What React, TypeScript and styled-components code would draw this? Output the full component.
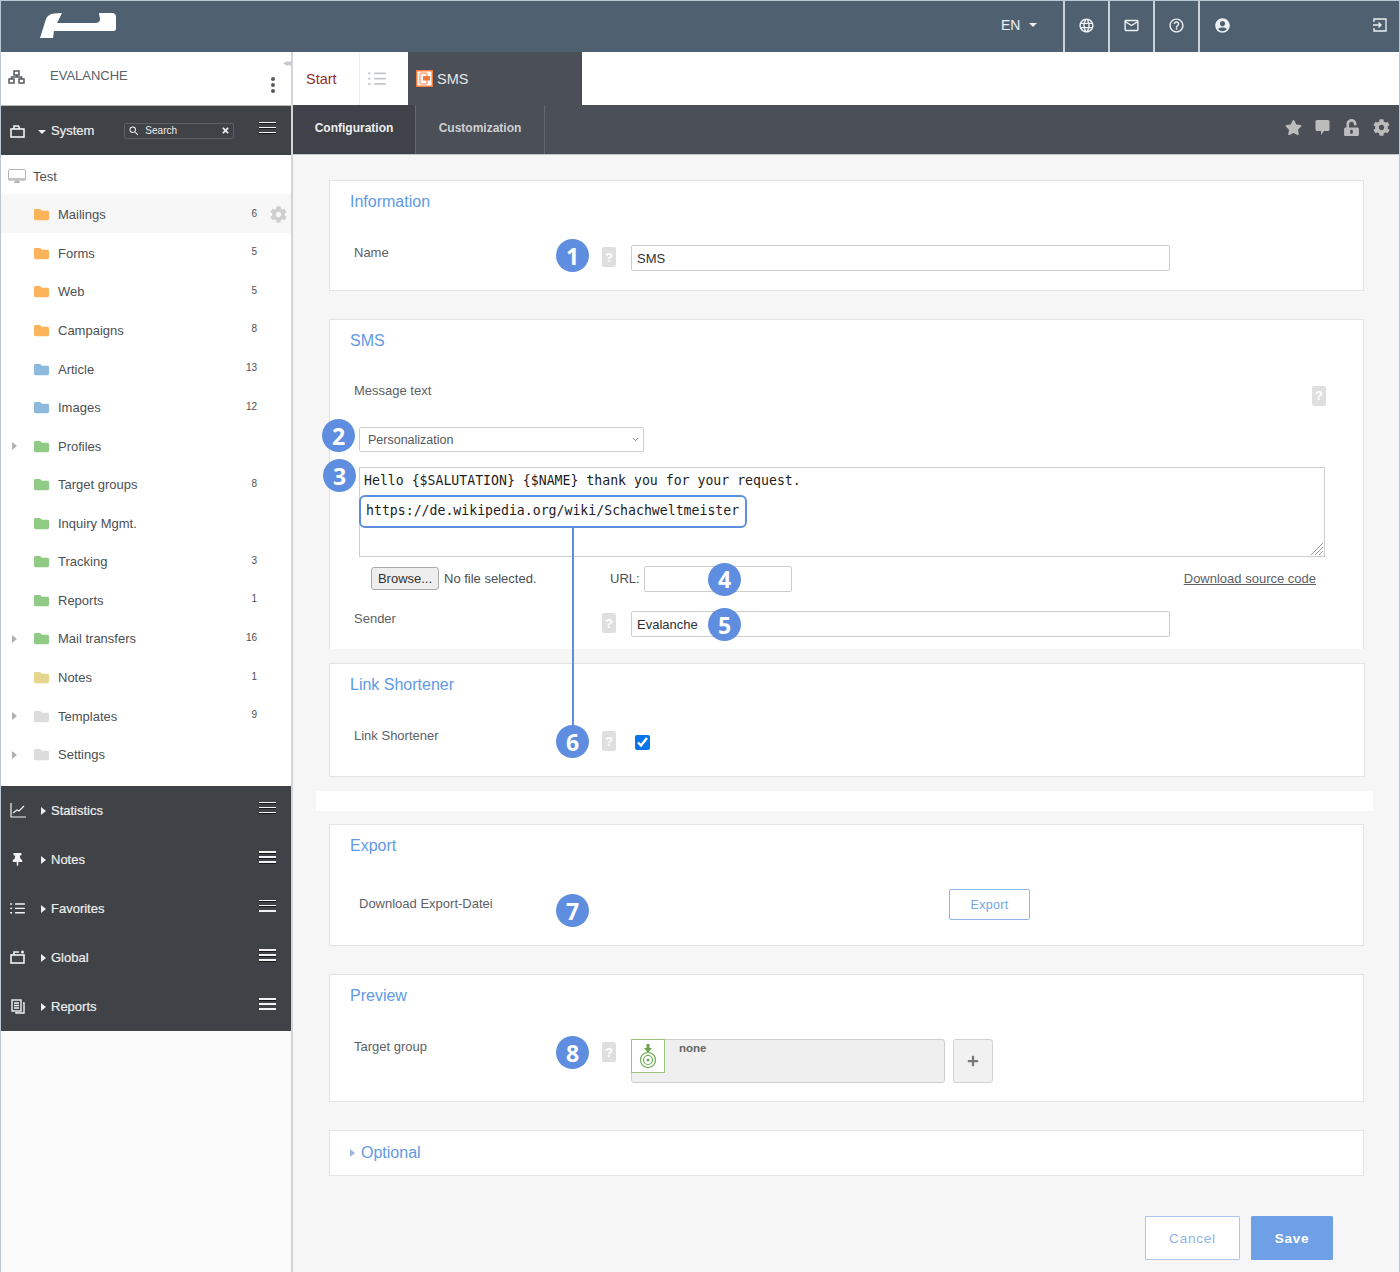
import styled, { createGlobalStyle } from 'styled-components';
import { ReactNode } from 'react';
import { ChevronDown } from 'lucide-react';
import { FaCog, FaFolder, FaPlus, FaStar, FaThumbtack, FaTimes, FaUnlockAlt, FaUserCircle } from 'react-icons/fa';
import { MdHelpOutline, MdLanguage, MdMailOutline, MdOutlineSearch } from 'react-icons/md';

const GlobalStyle = createGlobalStyle`
  html, body { margin: 0; padding: 0; background: #fff; }
  * { box-sizing: border-box; }
  body { font-family: "Liberation Sans", Arial, sans-serif; }
`;

const Frame = styled.div`
  width: 1400px;
  height: 1272px;
  overflow: hidden;
  display: flex;
  flex-direction: column;
  border: 1px solid #b9c8d3;
  border-bottom: 0;
  background: #f6f6f6;
`;

const TopBar = styled.header`
  height: 51px;
  flex: none;
  display: flex;
  align-items: stretch;
  background: #4f6170;
  color: #eef1f3;
`;

const Logo = styled.svg`
  width: 76px;
  height: 25px;
  margin: 12px 0 0 39px;
`;

const LangButton = styled.div`
  margin-left: auto;
  width: 62px;
  display: flex;
  align-items: center;
  gap: 9px;
  font-size: 14px;
  padding-bottom: 3px;
`;

const Caret = styled.span<{ $dir?: 'down' | 'right'; $color?: string }>`
  display: inline-block;
  width: 0;
  height: 0;
  ${(p) =>
    p.$dir === 'right'
      ? `border-top: 4px solid transparent; border-bottom: 4px solid transparent; border-left: 5px solid ${p.$color ?? '#eee'};`
      : `border-left: 4px solid transparent; border-right: 4px solid transparent; border-top: 4px solid ${p.$color ?? '#eee'};`}
`;

const TopIcon = styled.div`
  width: 45px;
  display: flex;
  align-items: center;
  justify-content: center;
  border-left: 2px solid #c9d2d8;
  font-size: 17px;
  padding-bottom: 3px;
`;

const UserCell = styled(TopIcon)`
  width: 201px;
  justify-content: space-between;
  padding: 0 12px 3px 15px;
`;

const Body = styled.div`
  flex: 1;
  display: flex;
  min-height: 0;
`;

const Sidebar = styled.aside`
  position: relative;
  width: 292px;
  flex: none;
  border-right: 2px solid #d2d4d6;
  background: #fbfbfb;
`;

const CollapseMark = styled.span`
  position: absolute;
  top: 5px;
  right: 2px;
  color: #c4c8cc;
  font-size: 10px;
  letter-spacing: -2px;
`;

const TreeHead = styled.div`
  height: 54px;
  display: flex;
  align-items: center;
  padding: 0 16px 4px 7px;
  background: #fff;
  border-bottom: 1px solid #b9bbbd;
  color: #5a6068;
  font-size: 13px;
`;

const HeadName = styled.span`
  margin-left: 25px;
  margin-bottom: 3px;
`;

const Kebab = styled.span`
  margin-left: auto;
  margin-top: 16px;
  width: 4px;
  height: 4px;
  border-radius: 50%;
  background: #555a60;
  box-shadow: 0 -6px 0 #555a60, 0 6px 0 #555a60;
`;

const DarkRow = styled.div<{ $h?: number }>`
  height: ${(p) => p.$h ?? 49}px;
  display: flex;
  align-items: center;
  background: #3f4247;
  color: #eee;
  padding-left: 8px;
  font-size: 13px;
  -webkit-text-stroke: 0.2px #eee;
`;

const DarkIcon = styled.span`
  width: 17px;
  height: 17px;
  display: flex;
  align-items: center;
  justify-content: center;
  font-size: 15px;
  -webkit-text-stroke: 0;
`;

const CaretSlot = styled.span`
  width: 25px;
  display: flex;
  justify-content: flex-end;
  padding-right: 5px;
  padding-top: 2px;
`;

const Burger = styled.span`
  margin-left: auto;
  margin-right: 15px;
  margin-bottom: 4px;
  width: 17px;
  height: 13px;
  background: repeating-linear-gradient(
    to bottom,
    #f2f2f2 0,
    #f2f2f2 1.5px,
    #17181a 1.5px,
    #17181a 2.5px,
    transparent 2.5px,
    transparent 5px
  );
`;

const SearchBox = styled.div`
  margin-left: 30px;
  width: 110px;
  height: 16px;
  display: flex;
  align-items: center;
  border: 1px solid #5c6066;
  border-radius: 2px;
  padding: 0 3px;
  font-size: 10px;
  gap: 5px;
  -webkit-text-stroke: 0;
  svg:last-child { margin-left: auto; }
`;

const Tree = styled.div`
  background: #fff;
  padding-bottom: 13.4px;
`;

const TreeRoot = styled.div`
  height: 39px;
  display: flex;
  align-items: center;
  padding: 3px 0 0 7px;
  gap: 7px;
  font-size: 13px;
  color: #4c4f54;
`;

const TreeRow = styled.div<{ $active?: boolean }>`
  height: 38.57px;
  display: grid;
  grid-template-columns: 32px 17px 8px 1fr 30px 34px;
  align-items: center;
  padding-top: 3px;
  font-size: 13px;
  color: #4c4f54;
  background: ${(p) => (p.$active ? '#f7f7f7' : 'transparent')};
`;

const Arrow = styled.span`
  display: flex;
  padding-left: 11px;
`;

const FolderIcon = styled(FaFolder)<{ $color: string }>`
  color: ${(p) => p.$color};
  width: 17px;
  height: 15px;
`;

const TreeLabel = styled.span`
  grid-column: 4;
`;

const Count = styled.span`
  grid-column: 5;
  text-align: right;
  font-size: 10px;
  margin-top: -3px;
`;

const RowGear = styled(FaCog)`
  justify-self: end;
  margin-right: 4px;
  color: #cfcfcf;
  font-size: 17px;
`;

const Main = styled.main`
  flex: 1;
  min-width: 0;
  display: flex;
  flex-direction: column;
`;

const TabRow = styled.div`
  height: 53px;
  flex: none;
  display: flex;
  background: #fff;
`;

const StartTab = styled.div`
  width: 67px;
  display: flex;
  align-items: center;
  padding-left: 13px;
  border-right: 1px solid #eee;
  color: #8f2f2a;
  font-size: 14.5px;
`;

const ListTab = styled.div`
  width: 48px;
  display: flex;
  align-items: center;
  padding-left: 8px;
  color: #c3c6c9;
`;

const OpenTab = styled.div`
  width: 174px;
  display: flex;
  align-items: center;
  gap: 4px;
  padding-left: 8px;
  background: #4b4f57;
  color: #e6e6e6;
  font-size: 14.5px;
`;

const SubBar = styled.div`
  height: 50px;
  flex: none;
  display: flex;
  background: #4b4f57;
  border-bottom: 1px solid #c5c8cb;
`;

const SubTab = styled.div<{ $active?: boolean }>`
  width: ${(p) => (p.$active ? 123 : 129)}px;
  display: flex;
  align-items: center;
  justify-content: center;
  padding-bottom: 4px;
  border-right: 1px solid #63676e;
  background: ${(p) => (p.$active ? '#3f4248' : 'transparent')};
  color: ${(p) => (p.$active ? '#eee' : '#cfd0d2')};
  font-size: 12px;
  font-weight: 700;
`;

const SubActions = styled.div`
  margin-left: auto;
  display: flex;
  align-items: center;
  gap: 13px;
  padding: 0 9px 4px 0;
  color: #bcbcbc;
  font-size: 17px;
`;

const Content = styled.div`
  flex: 1;
  padding: 25px 35px 0 36px;
`;

const Section = styled.section<{ $open?: boolean; $wide?: boolean; $gap?: number }>`
  background: #fff;
  border: 1px solid #e4e4e4;
  ${(p) => p.$open && 'border-bottom: 0;'}
  padding: 11px 0 ${(p) => (p.$open ? 12 : 18)}px;
  margin-bottom: ${(p) => p.$gap ?? 28}px;
  margin-right: ${(p) => (p.$wide ? -1 : 0)}px;
`;

const Title = styled.h2`
  margin: 0 0 0 20px;
  font-size: 16px;
  line-height: 20px;
  font-weight: 400;
  color: #5f9ae8;
`;

const FieldRow = styled.div<{ $mt?: number }>`
  display: flex;
  align-items: flex-start;
  margin-top: ${(p) => p.$mt ?? 27}px;
  padding-left: 24px;
`;

const FieldLabel = styled.div<{ $top?: number; $x?: number }>`
  width: 202px;
  flex: none;
  margin-top: ${(p) => p.$top ?? 4}px;
  padding-left: ${(p) => p.$x ?? 0}px;
  line-height: 20px;
  font-size: 13px;
  color: #5d6166;
`;

const Badge = styled.span`
  width: 33px;
  height: 33px;
  flex: none;
  position: relative;
  z-index: 2;
  display: flex;
  align-items: center;
  justify-content: center;
  border-radius: 50%;
  background: #5f8ee0;
  color: #fff;
  font-family: "Open Sans", sans-serif;
  font-size: 23px;
  font-weight: 700;
`;

const FloatBadge = styled(Badge)<{ $left: number; $top: number }>`
  position: absolute;
  left: ${(p) => p.$left}px;
  top: ${(p) => p.$top}px;
`;

const BadgeSlot = styled.span`
  width: 33px;
  flex: none;
`;

const Help = styled.span<{ $top?: number }>`
  width: 14px;
  height: 20px;
  flex: none;
  margin: ${(p) => p.$top ?? 8}px 15px 0 13px;
  display: flex;
  align-items: center;
  justify-content: center;
  border-radius: 2px;
  background: #dfdfdf;
  color: #fff;
  font-size: 13px;
  font-weight: 700;
`;

const TextInput = styled.input<{ $w?: number }>`
  width: ${(p) => p.$w ?? 539}px;
  height: 26px;
  display: block;
  padding: 0 5px;
  border: 1px solid #cccccc;
  border-radius: 2px;
  background: #fff;
  color: #2e3033;
  font: 13px "Liberation Sans", Arial, sans-serif;
  outline: none;
`;

const InputWrap = styled.div<{ $top?: number }>`
  position: relative;
  margin-top: ${(p) => p.$top ?? 6}px;
`;

const MessageHead = styled.div`
  display: flex;
  justify-content: space-between;
  margin-top: 30px;
  padding: 0 37px 0 24px;
  line-height: 20px;
  font-size: 13px;
  color: #5d6166;
`;

const MessageHelp = styled(Help)`
  margin: 5px 0 0;
`;

const SelectWrap = styled.div`
  position: relative;
  width: 285px;
  height: 25px;
  margin: 21px 0 0 29px;
  svg { position: absolute; right: 4px; top: 8px; color: #555; }
`;

const Select = styled.select`
  appearance: none;
  width: 100%;
  height: 100%;
  padding: 0 8px;
  border: 1px solid #cfcfcf;
  border-radius: 2px;
  background: #fff;
  color: #55585c;
  font: 12.5px "Liberation Sans", Arial, sans-serif;
`;

const MessageBox = styled.div`
  position: relative;
  width: 966px;
  height: 90px;
  margin: 15px 0 0 29px;
  border: 1px solid #cfcfcf;
  font-family: "DejaVu Sans Mono", monospace;
  font-size: 13.2px;
  color: #1d1d1d;
`;

const MessageLine = styled.div`
  padding-left: 4px;
  height: 26px;
  line-height: 25px;
`;

const LinkBox = styled.div`
  position: relative;
  width: 388px;
  height: 33px;
  margin: 1px 0 0 -1px;
  padding-left: 5px;
  line-height: 28px;
  background: #fff;
  border: 2px solid #5f8ee0;
  border-radius: 6px;

  &::after {
    content: '';
    position: absolute;
    left: 211px;
    top: 100%;
    width: 2px;
    height: 198px;
    margin-top: 2px;
    background: #5f8ee0;
  }
`;

const Resizer = styled.svg`
  position: absolute;
  right: 0;
  bottom: 0;
`;

const FileRow = styled.div`
  display: flex;
  align-items: center;
  height: 27px;
  margin-top: 8px;
  padding: 0 47px 0 41px;
  font-size: 13px;
  color: #4c4f54;
`;

const BrowseButton = styled.button`
  width: 68px;
  height: 23px;
  padding: 0;
  border: 1px solid #aaa;
  border-radius: 3px;
  background: #eeeeee;
  color: #333;
  font: 13px "Liberation Sans", Arial, sans-serif;
`;

const NoFile = styled.span`
  width: 166px;
  margin-left: 5px;
`;

const UrlLabel = styled.span`
  width: 34px;
`;

const SourceLink = styled.a`
  margin-left: auto;
  color: #5d6166;
  text-decoration: underline;
`;

const Band = styled.div`
  height: 20px;
  margin: 0 -9px 13px -13px;
  background: #fff;
`;

const CheckBox = styled.input`
  width: 15px;
  height: 15px;
  margin: 10px 0 0 4px;
  accent-color: #0a75e8;
`;

const ExportButton = styled.button`
  width: 81px;
  height: 31px;
  margin-left: 360px;
  border: 1px solid #8db6ea;
  border-radius: 2px;
  background: #fff;
  color: #75a5e6;
  font: 12.5px "Liberation Sans", Arial, sans-serif;
  letter-spacing: 0.3px;
`;

const ExportBadge = styled(Badge)`
  margin-top: 5px;
`;

const TargetBox = styled.div`
  width: 314px;
  height: 44px;
  margin-top: 3px;
  display: flex;
  align-items: flex-start;
  border: 1px solid #cecece;
  border-radius: 3px;
  background: #efefef;
  color: #666;
  font-size: 11.5px;
  font-weight: 700;
`;

const TargetThumb = styled.span`
  width: 34px;
  height: 34px;
  margin: -1px 0 0 -1px;
  display: flex;
  align-items: center;
  justify-content: center;
  border: 1px solid #9ac27b;
  background: #fff;
`;

const TargetName = styled.span`
  margin: 2px 0 0 14px;
`;

const AddButton = styled.button`
  width: 40px;
  height: 44px;
  margin: 3px 0 0 8px;
  display: flex;
  align-items: center;
  justify-content: center;
  border: 1px solid #d2d2d2;
  border-radius: 3px;
  background: #f1f1f1;
  color: #777;
  font-size: 12px;
`;

const OptionalBar = styled.div`
  height: 46px;
  display: flex;
  align-items: center;
  gap: 6px;
  padding-left: 20px;
  background: #fff;
  border: 1px solid #e4e4e4;
  color: #5f9ae8;
  font-size: 16px;
`;

const Actions = styled.div`
  display: flex;
  justify-content: flex-end;
  gap: 11px;
  margin-top: 40px;
  padding-right: 31px;
`;

const ActionButton = styled.button<{ $primary?: boolean }>`
  width: ${(p) => (p.$primary ? 82 : 95)}px;
  height: 44px;
  border: 1px solid ${(p) => (p.$primary ? '#6f9fe6' : '#a9c6ee')};
  border-radius: 1px;
  background: ${(p) => (p.$primary ? '#6f9fe6' : '#fff')};
  color: ${(p) => (p.$primary ? '#fff' : '#8fb4e9')};
  font: ${(p) => (p.$primary ? 700 : 400)} 13.5px "Liberation Sans", Arial, sans-serif;
  letter-spacing: 0.8px;
`;

const folders = [
  { name: 'Mailings', count: '6', color: '#fbb45c', active: true },
  { name: 'Forms', count: '5', color: '#fbb45c' },
  { name: 'Web', count: '5', color: '#fbb45c' },
  { name: 'Campaigns', count: '8', color: '#fbb45c' },
  { name: 'Article', count: '13', color: '#8db9dc' },
  { name: 'Images', count: '12', color: '#8db9dc' },
  { name: 'Profiles', color: '#8fcb85', more: true },
  { name: 'Target groups', count: '8', color: '#8fcb85' },
  { name: 'Inquiry Mgmt.', color: '#8fcb85' },
  { name: 'Tracking', count: '3', color: '#8fcb85' },
  { name: 'Reports', count: '1', color: '#8fcb85' },
  { name: 'Mail transfers', count: '16', color: '#8fcb85', more: true },
  { name: 'Notes', count: '1', color: '#e5d58d' },
  { name: 'Templates', count: '9', color: '#dcdcdc', more: true },
  { name: 'Settings', color: '#dcdcdc', more: true },
];

const TreeIcon = () => (
  <svg width="17" height="14" viewBox="0 0 17 14" fill="none" stroke="#555a60" strokeWidth="1.5">
    <rect x="6" y="1" width="5" height="4" />
    <rect x="1" y="9" width="5" height="4" />
    <rect x="11" y="9" width="5" height="4" />
    <path d="M3.5 9V7h10v2M8.5 5v2" />
  </svg>
);

const CaseIcon = ({ dot }: { dot?: boolean }) => (
  <svg width="15" height="14" viewBox="0 0 15 14" fill="none" stroke="#f2f2f2" strokeWidth="1.6">
    <rect x="1" y="5" width="13" height="8" />
    <path d="M4 5V2h5" />
    {dot && <circle cx="12.5" cy="2" r="1.5" fill="#f2f2f2" stroke="none" />}
    {!dot && <path d="M9 2v3" />}
  </svg>
);

const ChartIcon = () => (
  <svg width="16" height="16" viewBox="0 0 16 16" fill="none" stroke="#f2f2f2" strokeWidth="1.2">
    <path d="M1 1v14h15" />
    <path d="M3 11l4-3 2 1 5-5" />
  </svg>
);

const ListIcon = ({ color = '#f2f2f2', size = 15 }: { color?: string; size?: number }) => (
  <svg width={size} height={size * 0.85} viewBox="0 0 15 13" fill="none" stroke={color} strokeWidth="1.4">
    <path d="M0 2h2M5 2h10M0 6.5h2M5 6.5h10M0 11h2M5 11h10" />
  </svg>
);

const CopyIcon = () => (
  <svg width="14" height="15" viewBox="0 0 14 15" fill="none" stroke="#f2f2f2" strokeWidth="1.4">
    <rect x="1" y="1" width="9" height="11" />
    <path d="M12 4h1v10H5v-1M3 4h5M3 6.5h5M3 9h5" />
  </svg>
);

const MonitorIcon = () => (
  <svg width="18" height="15" viewBox="0 0 18 15">
    <rect x="0.5" y="0.5" width="17" height="10.5" rx="1" fill="#fff" stroke="#b5b5b5" />
    <rect x="0.5" y="9" width="17" height="2.5" fill="#c4c4c4" />
    <path d="M6 14h6l-1-2.5H7z" fill="#b5b5b5" />
  </svg>
);

const LogoutIcon = () => (
  <svg width="14" height="14" viewBox="0 0 14 14" fill="none" stroke="#eef1f3" strokeWidth="1.3">
    <path d="M1 4V1h12v12H1v-3" />
    <path d="M0 7h8M5.5 4.5L8 7l-2.5 2.5" />
  </svg>
);

const BubbleIcon = () => (
  <svg width="15" height="17" viewBox="0 0 15 17" fill="#bcbcbc">
    <path d="M2 1h11a1.500 1.500 0 0 1 1.500 1.500v8A1.500 1.500 0 0 1 13 12H9l-3 4v-4H2a1.500 1.500 0 0 1-1.500-1.500v-8A1.500 1.500 0 0 1 2 1z" />
  </svg>
);

const SmsIcon = () => (
  <svg width="17" height="17" viewBox="0 0 17 17">
    <rect width="17" height="17" fill="#f47c3c" />
    <rect x="1.500" y="1.500" width="14" height="14" fill="#fff" />
    <rect x="4" y="3" width="7" height="11" rx="1" fill="none" stroke="#f47c3c" />
    <rect x="7" y="6" width="7" height="4.500" fill="#f47c3c" />
  </svg>
);

const TargetIcon = () => (
  <svg width="18" height="26" viewBox="0 0 18 26" fill="none" stroke="#6aa84f">
    <path d="M7.500 1h3v4h2.500L9 10 5 5h2.500z" fill="#6aa84f" stroke="none" />
    <circle cx="9" cy="17" r="7.500" strokeWidth="1.200" />
    <circle cx="9" cy="17" r="4.500" strokeWidth="1.200" />
    <circle cx="9" cy="17" r="1.500" fill="#6aa84f" stroke="none" />
  </svg>
);

const PanelRow = ({ icon, label }: { icon: ReactNode; label: string }) => (
  <DarkRow>
    <DarkIcon>{icon}</DarkIcon>
    <CaretSlot>
      <Caret $dir="right" />
    </CaretSlot>
    {label}
    <Burger />
  </DarkRow>
);

export default function App() {
  return (
    <>
      <GlobalStyle />
      <Frame>
        <TopBar>
          <Logo viewBox="0 0 76 25">
            <path
              d="M0 25L6 6Q8 1 14 0.500L22 0L17 10H55Q60 10 60 6L59 0H72Q76 0 76 4V16Q76 18 72 18H14L13 25Z"
              fill="#fff"
            />
          </Logo>
          <LangButton>
            EN <Caret />
          </LangButton>
          <TopIcon>
            <MdLanguage />
          </TopIcon>
          <TopIcon>
            <MdMailOutline />
          </TopIcon>
          <TopIcon>
            <MdHelpOutline />
          </TopIcon>
          <UserCell>
            <FaUserCircle size={15} />
            <LogoutIcon />
          </UserCell>
        </TopBar>
        <Body>
          <Sidebar>
            <CollapseMark>◂◂</CollapseMark>
            <TreeHead>
              <TreeIcon />
              <HeadName>EVALANCHE</HeadName>
              <Kebab />
            </TreeHead>
            <DarkRow>
              <DarkIcon>
                <CaseIcon />
              </DarkIcon>
              <CaretSlot>
                <Caret />
              </CaretSlot>
              System
              <SearchBox>
                <MdOutlineSearch size={12} />
                Search
                <FaTimes size={9} />
              </SearchBox>
              <Burger />
            </DarkRow>
            <Tree>
              <TreeRoot>
                <MonitorIcon />
                Test
              </TreeRoot>
              {folders.map((f) => (
                <TreeRow key={f.name} $active={f.active}>
                  <Arrow>{f.more && <Caret $dir="right" $color="#b0b0b0" />}</Arrow>
                  <FolderIcon $color={f.color} />
                  <TreeLabel>{f.name}</TreeLabel>
                  <Count>{f.count}</Count>
                  {f.active && <RowGear />}
                </TreeRow>
              ))}
            </Tree>
            <PanelRow icon={<ChartIcon />} label="Statistics" />
            <PanelRow icon={<FaThumbtack size={13} color="#f2f2f2" />} label="Notes" />
            <PanelRow icon={<ListIcon />} label="Favorites" />
            <PanelRow icon={<CaseIcon dot />} label="Global" />
            <PanelRow icon={<CopyIcon />} label="Reports" />
          </Sidebar>
          <Main>
            <TabRow>
              <StartTab>Start</StartTab>
              <ListTab>
                <ListIcon color="#c3c6c9" size={18} />
              </ListTab>
              <OpenTab>
                <SmsIcon />
                SMS
              </OpenTab>
            </TabRow>
            <SubBar>
              <SubTab $active>Configuration</SubTab>
              <SubTab>Customization</SubTab>
              <SubActions>
                <FaStar />
                <BubbleIcon />
                <FaUnlockAlt />
                <FaCog />
              </SubActions>
            </SubBar>
            <Content>
              <Section>
                <Title>Information</Title>
                <FieldRow>
                  <FieldLabel>Name</FieldLabel>
                  <Badge>1</Badge>
                  <Help>?</Help>
                  <InputWrap>
                    <TextInput readOnly value="SMS" />
                  </InputWrap>
                </FieldRow>
              </Section>
              <Section $open $gap={14}>
                <Title>SMS</Title>
                <MessageHead>
                  Message text
                  <MessageHelp>?</MessageHelp>
                </MessageHead>
                <SelectWrap>
                  <FloatBadge $left={-37} $top={-8}>
                    2
                  </FloatBadge>
                  <Select>
                    <option>Personalization</option>
                  </Select>
                  <ChevronDown size={9} strokeWidth={2} />
                </SelectWrap>
                <MessageBox>
                  <FloatBadge $left={-37} $top={-9}>
                    3
                  </FloatBadge>
                  <MessageLine>Hello {'{$SALUTATION}'} {'{$NAME}'} thank you for your request.</MessageLine>
                  <LinkBox>https://de.wikipedia.org/wiki/Schachweltmeister</LinkBox>
                  <Resizer width="15" height="15" viewBox="0 0 15 15" stroke="#9a9a9a">
                    <path d="M2 14L14 2M6 14L14 6M10 14L14 10" />
                  </Resizer>
                </MessageBox>
                <FileRow>
                  <BrowseButton>Browse...</BrowseButton>
                  <NoFile>No file selected.</NoFile>
                  <UrlLabel>URL:</UrlLabel>
                  <InputWrap $top={0}>
                    <TextInput readOnly value="" $w={148} />
                    <FloatBadge $left={64} $top={-3}>
                      4
                    </FloatBadge>
                  </InputWrap>
                  <SourceLink>Download source code</SourceLink>
                </FileRow>
                <FieldRow $mt={13}>
                  <FieldLabel>Sender</FieldLabel>
                  <BadgeSlot />
                  <Help>?</Help>
                  <InputWrap>
                    <TextInput readOnly value="Evalanche" />
                    <FloatBadge $left={77} $top={-3}>
                      5
                    </FloatBadge>
                  </InputWrap>
                </FieldRow>
              </Section>
              <Section $wide $gap={14}>
                <Title>Link Shortener</Title>
                <FieldRow $mt={30}>
                  <FieldLabel $top={1}>Link Shortener</FieldLabel>
                  <Badge>6</Badge>
                  <Help $top={6}>?</Help>
                  <CheckBox type="checkbox" checked readOnly />
                </FieldRow>
              </Section>
              <Band />
              <Section>
                <Title>Export</Title>
                <FieldRow $mt={33}>
                  <FieldLabel $top={5} $x={5}>
                    Download Export-Datei
                  </FieldLabel>
                  <ExportBadge>7</ExportBadge>
                  <ExportButton>Export</ExportButton>
                </FieldRow>
              </Section>
              <Section>
                <Title>Preview</Title>
                <FieldRow $mt={30}>
                  <FieldLabel $top={1}>Target group</FieldLabel>
                  <Badge>8</Badge>
                  <Help $top={6}>?</Help>
                  <TargetBox>
                    <TargetThumb>
                      <TargetIcon />
                    </TargetThumb>
                    <TargetName>none</TargetName>
                  </TargetBox>
                  <AddButton>
                    <FaPlus />
                  </AddButton>
                </FieldRow>
              </Section>
              <OptionalBar>
                <Caret $dir="right" $color="#9db8dc" />
                Optional
              </OptionalBar>
              <Actions>
                <ActionButton>Cancel</ActionButton>
                <ActionButton $primary>Save</ActionButton>
              </Actions>
            </Content>
          </Main>
        </Body>
      </Frame>
    </>
  );
}
